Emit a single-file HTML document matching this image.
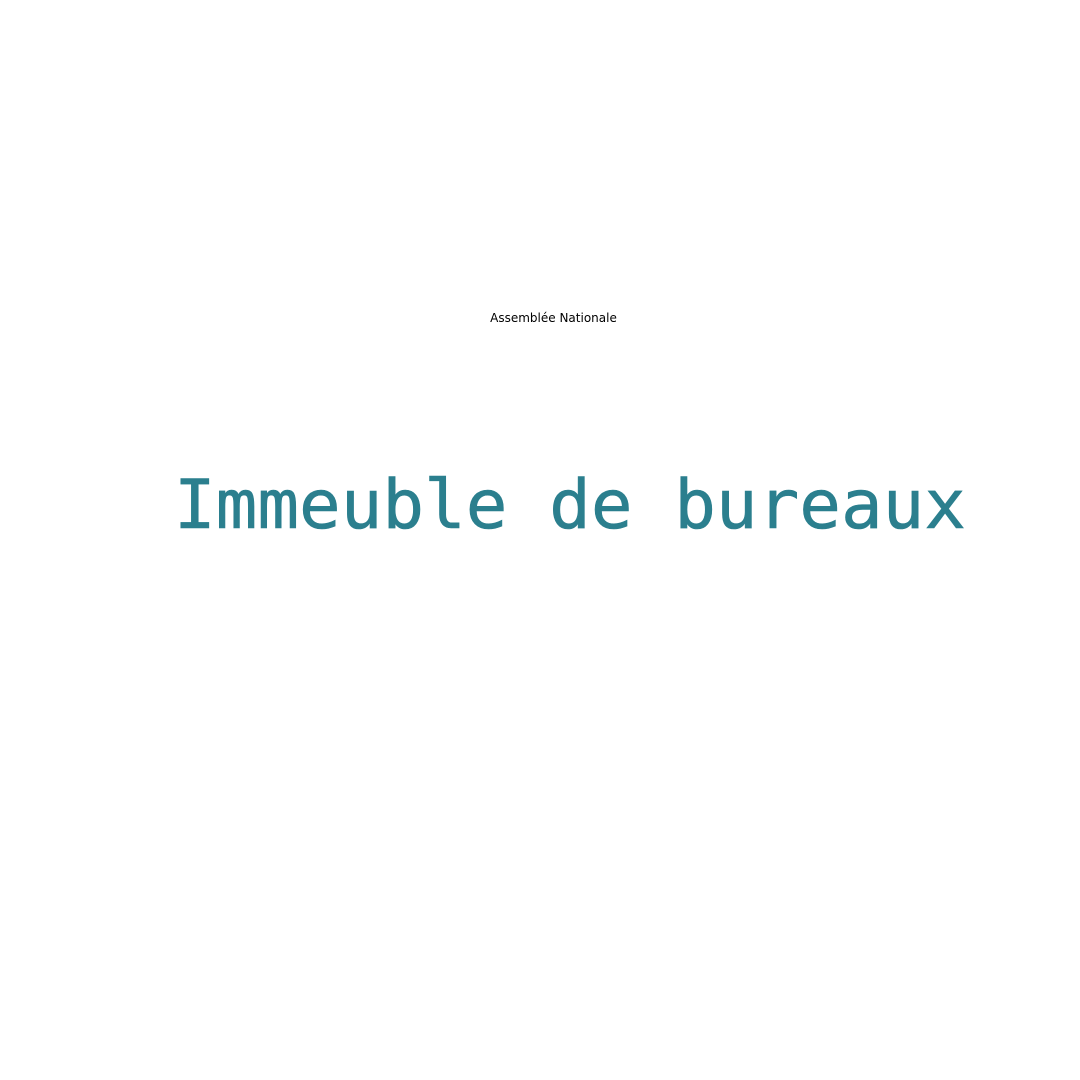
<!DOCTYPE html>
<html><head><meta charset="utf-8"><style>
html,body{margin:0;padding:0;background:#fff;width:1080px;height:1080px;overflow:hidden}
</style></head><body>
<svg width="1080" height="1080" xmlns="http://www.w3.org/2000/svg">
<text x="553.5" y="322" text-anchor="middle" font-family="DejaVu Sans, sans-serif" font-size="12" fill="#000">Assemblée Nationale</text>
<text x="174" y="528" font-family="DejaVu Sans Mono, monospace" font-size="68" fill="#2b7f8e" stroke="#2b7f8e" stroke-width="0.6" textLength="792" lengthAdjust="spacingAndGlyphs">Immeuble de bureaux</text>
</svg>
</body></html>
